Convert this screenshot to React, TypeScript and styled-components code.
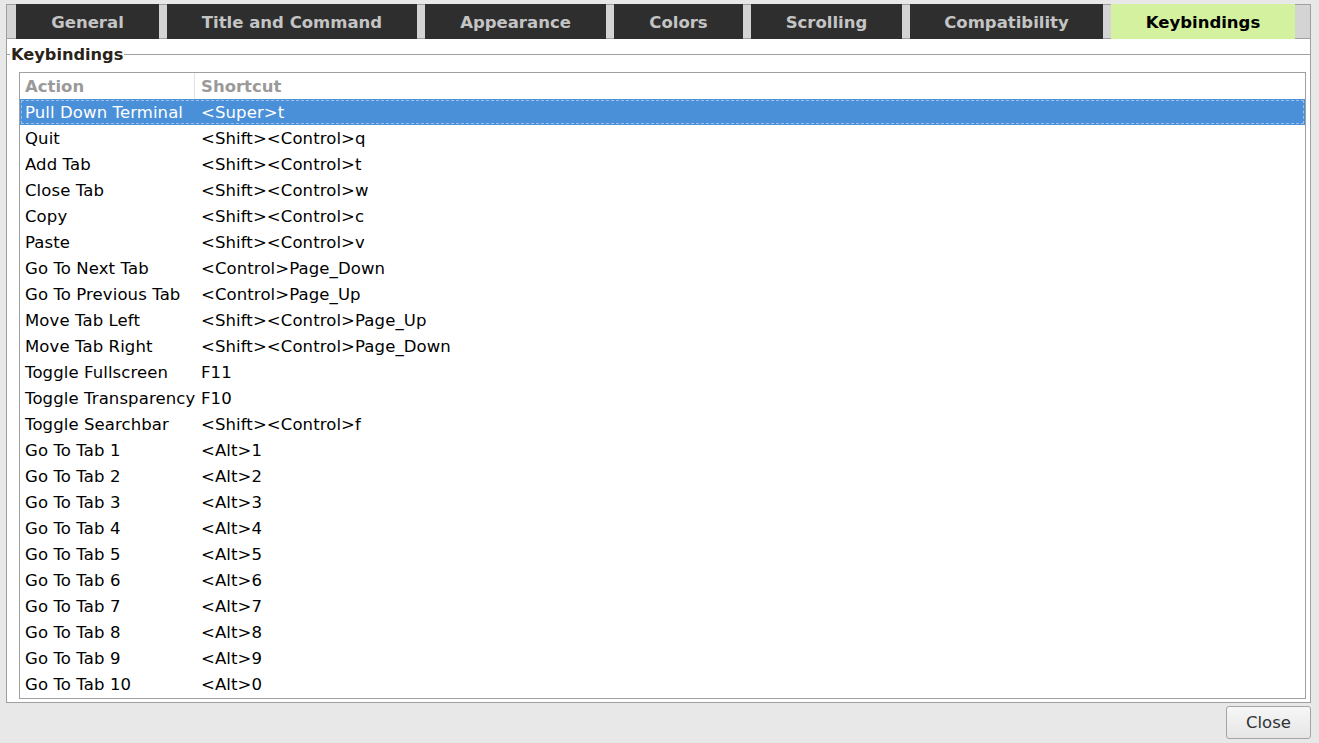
import React from "react";
import styled, { createGlobalStyle } from "styled-components";

const GlobalStyle = createGlobalStyle`
  html, body {
    margin: 0;
    padding: 0;
    background: #e8e8e8;
    font-family: "DejaVu Sans", Verdana, sans-serif;
  }
  * { box-sizing: border-box; }
`;

const Window = styled.div`
  width: 1319px;
  height: 743px;
  padding: 4px 8px 4px 6px;
  display: flex;
  flex-direction: column;
`;

const Notebook = styled.div`
  height: 699px;
  display: flex;
  flex-direction: column;
`;

const TabStrip = styled.div`
  height: 35px;
  display: flex;
  gap: 8px;
  padding-left: 9px;
  background: #d4d4d4;
  border: 1px solid #a0a0a0;
`;

const Tab = styled.div<{ $w: number; $active?: boolean }>`
  width: ${(p) => p.$w}px;
  margin: -1px 0 -1px 0;
  display: flex;
  align-items: center;
  justify-content: center;
  padding-top: 1px;
  background: ${(p) => (p.$active ? "#d4f1a0" : "#2e2e2e")};
  color: ${(p) => (p.$active ? "#000000" : "#c4c4c4")};
  font-weight: bold;
  font-size: 16.5px;
`;

const Page = styled.div`
  flex: 1;
  display: flex;
  flex-direction: column;
  background: #ffffff;
  border: 1px solid #a0a0a0;
  border-top: none;
  padding-top: 6px;
`;

const FrameTitle = styled.div`
  height: 19px;
  display: flex;
  align-items: center;
`;

const FrameLine = styled.div<{ $grow?: boolean }>`
  ${(p) => (p.$grow ? "flex: 1;" : "width: 3px;")}
  border-top: 1px solid #a0a0a0;
`;

const FrameLabel = styled.span`
  padding: 0 1px;
  font-weight: bold;
  font-size: 16.2px;
  color: #2a2418;
`;

const TreeView = styled.div`
  flex: 1;
  margin: 8px 4px 3px 12px;
  border: 1px solid #a0a0a0;
  display: flex;
  flex-direction: column;
`;

const Row = styled.div<{ $selected?: boolean }>`
  height: 26px;
  flex: none;
  display: flex;
  align-items: center;
  font-size: 16.5px;
  letter-spacing: 0.1px;
  color: ${(p) => (p.$selected ? "#ffffff" : "#000000")};
  background: ${(p) => (p.$selected ? "#4a90d9" : "transparent")};
  ${(p) => (p.$selected ? "outline: 1px dashed #9cc2ec; outline-offset: -2px;" : "")}
`;

const HeaderRow = styled(Row)`
  font-weight: bold;
  color: #9a9a9a;
  letter-spacing: 0;
`;

const ActionCell = styled.div<{ $header?: boolean }>`
  width: 175px;
  height: 100%;
  display: flex;
  align-items: center;
  padding-left: 5px;
  white-space: nowrap;
  ${(p) => (p.$header ? "border-right: 1px solid #e2e2e2;" : "")}
`;

const ShortcutCell = styled.div`
  padding-left: 6px;
  white-space: nowrap;
`;

const ButtonBar = styled.div`
  display: flex;
  justify-content: flex-end;
  padding-top: 3px;
`;

const Button = styled.button`
  width: 85px;
  height: 33px;
  border: 1px solid #a4a4a4;
  border-radius: 3px;
  background: linear-gradient(#f6f6f6, #e6e6e6);
  font-family: "DejaVu Sans", Verdana, sans-serif;
  font-size: 16.5px;
  color: #2e3436;
  padding: 0;
`;

const tabs = [
  { label: "General", w: 143 },
  { label: "Title and Command", w: 250 },
  { label: "Appearance", w: 181 },
  { label: "Colors", w: 129 },
  { label: "Scrolling", w: 151 },
  { label: "Compatibility", w: 193 },
  { label: "Keybindings", w: 184, active: true },
];

const bindings: [string, string][] = [
  ["Pull Down Terminal", "<Super>t"],
  ["Quit", "<Shift><Control>q"],
  ["Add Tab", "<Shift><Control>t"],
  ["Close Tab", "<Shift><Control>w"],
  ["Copy", "<Shift><Control>c"],
  ["Paste", "<Shift><Control>v"],
  ["Go To Next Tab", "<Control>Page_Down"],
  ["Go To Previous Tab", "<Control>Page_Up"],
  ["Move Tab Left", "<Shift><Control>Page_Up"],
  ["Move Tab Right", "<Shift><Control>Page_Down"],
  ["Toggle Fullscreen", "F11"],
  ["Toggle Transparency", "F10"],
  ["Toggle Searchbar", "<Shift><Control>f"],
  ["Go To Tab 1", "<Alt>1"],
  ["Go To Tab 2", "<Alt>2"],
  ["Go To Tab 3", "<Alt>3"],
  ["Go To Tab 4", "<Alt>4"],
  ["Go To Tab 5", "<Alt>5"],
  ["Go To Tab 6", "<Alt>6"],
  ["Go To Tab 7", "<Alt>7"],
  ["Go To Tab 8", "<Alt>8"],
  ["Go To Tab 9", "<Alt>9"],
  ["Go To Tab 10", "<Alt>0"],
];

export default function App() {
  return (
    <>
      <GlobalStyle />
      <Window>
        <Notebook>
          <TabStrip>
            {tabs.map((t) => (
              <Tab key={t.label} $w={t.w} $active={t.active}>
                {t.label}
              </Tab>
            ))}
          </TabStrip>
          <Page>
            <FrameTitle>
              <FrameLine />
              <FrameLabel>Keybindings</FrameLabel>
              <FrameLine $grow />
            </FrameTitle>
            <TreeView>
              <HeaderRow>
                <ActionCell $header>Action</ActionCell>
                <ShortcutCell>Shortcut</ShortcutCell>
              </HeaderRow>
              {bindings.map(([action, key], i) => (
                <Row key={action} $selected={i === 0}>
                  <ActionCell>{action}</ActionCell>
                  <ShortcutCell>{key}</ShortcutCell>
                </Row>
              ))}
            </TreeView>
          </Page>
        </Notebook>
        <ButtonBar>
          <Button>Close</Button>
        </ButtonBar>
      </Window>
    </>
  );
}
